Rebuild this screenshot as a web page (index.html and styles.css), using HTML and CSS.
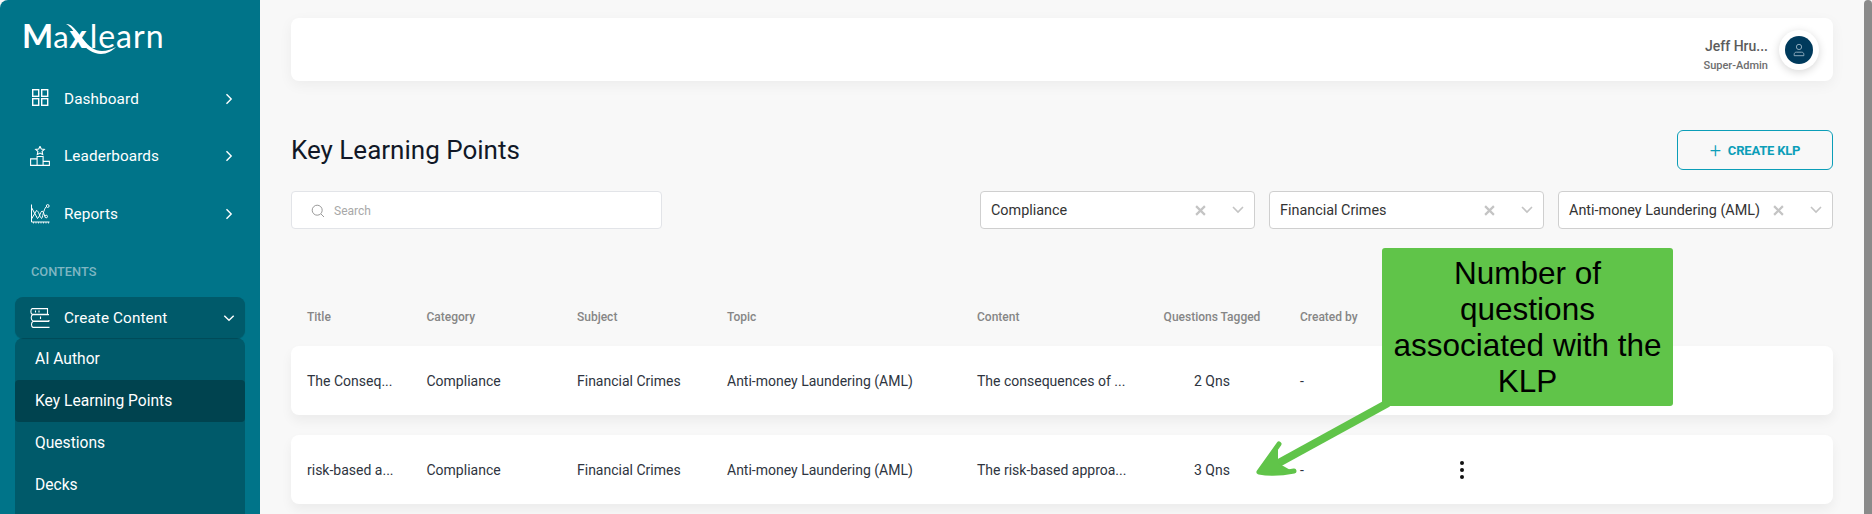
FILE: index.html
```html
<!DOCTYPE html>
<html lang="en">
<head>
<meta charset="utf-8">
<title>Key Learning Points</title>
<link rel="stylesheet" href="styles.css">
</head>
<body>
<div class="app">
  <aside class="sidebar">
    <div class="logo"><span class="logo-m">M</span><span class="logo-a">a</span><span class="logo-x">x</span><span class="logo-learn">learn</span>
      <svg class="logo-swoosh" viewBox="0 0 56 36" width="56" height="36"><path d="M2 1c7 0 11 8 17 15 6 8 12 12 19 12 5 0 10-2 14-4-4 4-9 7-15 7-8 0-15-5-21-13C11 11 8 4 2 1z" fill="#fff"/></svg>
    </div>
    <nav class="nav">
      <a class="nav-item">
        <svg class="nav-icon" viewBox="0 0 20 20" fill="none" stroke="#fff" stroke-width="1.4"><rect x="2.700" y="0.700" width="6" height="6.600"/><rect x="11.700" y="0.700" width="6" height="6.600"/><rect x="2.700" y="9.700" width="6" height="6.600"/><rect x="11.700" y="9.700" width="6" height="6.600"/></svg>
        <span class="nav-label">Dashboard</span>
        <svg class="chev" viewBox="0 0 12 12" fill="none" stroke="#fff" stroke-width="1.400"><path d="M3.500 1.200 8.200 6 3.500 10.800"/></svg>
      </a>
      <a class="nav-item">
        <svg class="nav-icon" viewBox="0 0 20 20" fill="none" stroke="#fff" stroke-width="1.100"><path d="M.6 19.400v-6.500h6.500v6.500zM7.100 19.400V10.500h6v8.900zM13.100 19.400v-4h6.300v4zM10 .3l1.300 2.700 3 .4-2.200 2 .6 3L10 7l-2.700 1.400.6-3-2.200-2 3-.4z"/></svg>
        <span class="nav-label">Leaderboards</span>
        <svg class="chev" viewBox="0 0 12 12" fill="none" stroke="#fff" stroke-width="1.400"><path d="M3.500 1.200 8.200 6 3.500 10.800"/></svg>
      </a>
      <a class="nav-item">
        <svg class="nav-icon" viewBox="0 0 20 20" fill="none" stroke="#fff" stroke-width="1"><path d="M1.500 .5v17.500H19.500"/><path d="M1.500 3.500 7.500 14.500c2-1 2.500-6 4.500-7.500 1.500 0 2 4 3 5.500M1.500 15 6.500 6.500c2 0 3 6 5 8 1 0 2-9 4.500-11.500"/><circle cx="17.700" cy="2" r="1.400"/><circle cx="16.200" cy="12.500" r="1.300"/><path d="M3.500 18v1.500M6 18v1.500M8.500 18v1.500M11 18v1.500M13.500 18v1.500M16 18v1.500M18.500 18v1.500" stroke-width=".8"/></svg>
        <span class="nav-label">Reports</span>
        <svg class="chev" viewBox="0 0 12 12" fill="none" stroke="#fff" stroke-width="1.400"><path d="M3.500 1.200 8.200 6 3.500 10.800"/></svg>
      </a>
    </nav>
    <div class="nav-section">CONTENTS</div>
    <div class="group">
      <a class="group-head">
        <svg class="nav-icon" viewBox="0 0 20 20" fill="none" stroke="#fff" stroke-width="1.100"><path d="M2 .6h15.500v5.600H2C.5 5 .5 1.800 2 .6zM3 6.600C.6 7.600.6 12 3 13h16v-1M19 6.600H3M19 13.500H3C1 14.600 1 18.400 3 19.400h16.500M5.500 2.500v2M9 2.500v2M10.500 8.500v2.500"/></svg>
        <span class="nav-label">Create Content</span>
        <svg class="chev" viewBox="0 0 12 12" fill="none" stroke="#fff" stroke-width="1.400"><path d="M1.300 3.700 6 8.300 10.700 3.700"/></svg>
      </a>
      <div class="submenu">
        <a class="sub-item">AI Author</a>
        <a class="sub-item active">Key Learning Points</a>
        <a class="sub-item">Questions</a>
        <a class="sub-item">Decks</a>
      </div>
    </div>
  </aside>

  <main class="main">
    <header class="topbar">
      <div class="user">
        <div class="user-name">Jeff Hru...</div>
        <div class="user-role">Super-Admin</div>
      </div>
      <div class="avatar-ring">
        <div class="avatar">
          <svg viewBox="0 0 16 16" width="14" height="14" fill="none" stroke="#9fb8c8" stroke-width="1"><circle cx="8" cy="4.500" r="3"/><path d="M2.500 14.500v-1.500c0-1.500 1-2.500 2.500-2.500h6c1.500 0 2.500 1 2.500 2.500v1.500z"/></svg>
        </div>
      </div>
    </header>

    <div class="title-row">
      <h1 class="page-title">Key Learning Points</h1>
      <button class="create-btn"><span class="plus">+</span>CREATE KLP</button>
    </div>

    <div class="filters">
      <div class="search">
        <svg viewBox="0 0 14 14" width="14" height="14" fill="none" stroke="#9a9a9a" stroke-width="1"><circle cx="6.200" cy="6.200" r="5"/><path d="M10 10l3 3"/></svg>
        <span>Search</span>
      </div>
      <div class="selects">
        <div class="select"><span class="select-val">Compliance</span><span class="x"><svg viewBox="0 0 10 10" width="11" height="11" stroke="#c4c4c4" stroke-width="2"><path d="M1 1l8 8M9 1l-8 8"/></svg></span><svg class="caret" viewBox="0 0 12 8" width="12" height="8" fill="none" stroke="#c4c4c4" stroke-width="1.600"><path d="M1 1l5 5 5-5"/></svg></div>
        <div class="select"><span class="select-val">Financial Crimes</span><span class="x"><svg viewBox="0 0 10 10" width="11" height="11" stroke="#c4c4c4" stroke-width="2"><path d="M1 1l8 8M9 1l-8 8"/></svg></span><svg class="caret" viewBox="0 0 12 8" width="12" height="8" fill="none" stroke="#c4c4c4" stroke-width="1.600"><path d="M1 1l5 5 5-5"/></svg></div>
        <div class="select"><span class="select-val">Anti-money Laundering (AML)</span><span class="x"><svg viewBox="0 0 10 10" width="11" height="11" stroke="#c4c4c4" stroke-width="2"><path d="M1 1l8 8M9 1l-8 8"/></svg></span><svg class="caret" viewBox="0 0 12 8" width="12" height="8" fill="none" stroke="#c4c4c4" stroke-width="1.600"><path d="M1 1l5 5 5-5"/></svg></div>
      </div>
    </div>

    <div class="table">
      <div class="row head">
        <span>Title</span><span>Category</span><span>Subject</span><span>Topic</span><span>Content</span><span class="ctr">Questions Tagged</span><span>Created by</span><span></span>
      </div>
      <div class="row card">
        <span>The Conseq...</span><span>Compliance</span><span>Financial Crimes</span><span>Anti-money Laundering (AML)</span><span>The consequences of ...</span><span class="ctr">2 Qns</span><span>-</span><span></span>
      </div>
      <div class="row card">
        <span>risk-based a...</span><span>Compliance</span><span>Financial Crimes</span><span>Anti-money Laundering (AML)</span><span>The risk-based approa...</span><span class="ctr">3 Qns</span><span>-</span><span class="dots"><i></i><i></i><i></i></span>
      </div>
    </div>
  </main>
  <div class="scrollbar"></div>

  <div class="callout">Number of questions associated with the KLP</div>
  <svg class="arrow" viewBox="0 0 1872 514" width="1872" height="514"><path d="M1388 403 1266 470" stroke="#60c449" stroke-width="8" fill="none"/><path d="M1279 444 1259 472C1270 474 1284 473 1294 471" stroke="#60c449" stroke-width="5" fill="none" stroke-linecap="round" stroke-linejoin="round"/><path d="M1278 446 1259 472 1292 471 1278 463z" fill="#60c449"/></svg>
</div>
</body>
</html>
```
FILE: styles.css
```css
* { box-sizing: border-box; }
html, body { margin: 0; height: 514px; overflow: hidden; }
body { font-family: Roboto, "Liberation Sans", sans-serif; background: #f8f8f8; }
.app { display: flex; width: 1872px; height: 514px; position: relative; overflow: hidden; }

.sidebar { width: 260px; flex: none; background: #007489; color: #fff; padding: 0 15px; border-top-left-radius: 8px; }
.logo { position: relative; height: 70px; padding: 16px 0 0 7px; display: flex; align-items: baseline; font-family: Lato, sans-serif; line-height: 38px; white-space: nowrap; }
.logo-m { font-size: 33px; font-weight: 700; letter-spacing: -2px; }
.logo-a { font-size: 31px; font-weight: 400; margin-left: 2px; }
.logo-x { font-size: 32px; font-weight: 900; margin-left: 1px; }
.logo-learn { font-size: 32px; font-weight: 400; letter-spacing: 1px; margin-left: 3px; }
.logo-swoosh { position: absolute; left: 49px; top: 23px; }
.nav { display: flex; flex-direction: column; }
.nav-item { height: 57.500px; display: flex; align-items: center; padding: 0 10px 0 15px; font-size: 15.300px; }
.nav-icon { width: 20px; height: 20px; flex: none; }
.nav-label { margin-left: 14px; flex: 1; letter-spacing: .1px; }
.chev { width: 12px; height: 12px; flex: none; }
.nav-section { margin-top: 20.500px; padding-left: 16px; font-size: 12.800px; font-weight: 500; color: #7fb6c2; height: 34px; line-height: 18px; }
.group { display: flex; flex-direction: column; }
.group-head { height: 41px; background: #005a6a; border-radius: 8px; display: flex; align-items: center; padding: 0 10px 0 15px; font-size: 15.300px; box-shadow: 0 1px 1px rgba(0,0,0,.18); position: relative; }
.submenu { background: #005a6a; border-radius: 8px 8px 0 0; height: 200px; }
.sub-item { display: flex; align-items: center; height: 42px; padding-left: 20px; font-size: 15.600px; border-radius: 4px; }
.sub-item.active { background: #00434f; }

.main { flex: 1; padding: 18px 31px 0; min-width: 0; }
.topbar { height: 63px; background: #fff; border-radius: 8px; box-shadow: 0 4px 14px rgba(0,0,0,.05); display: flex; justify-content: flex-end; align-items: center; padding-right: 14px; }
.user { text-align: right; margin-right: 11px; padding-top: 10px; }
.user-name { font-size: 14px; font-weight: 500; color: #5c5c5c; line-height: 20px; }
.user-role { font-size: 11px; font-weight: 500; color: #6e6e6e; line-height: 16px; margin-top: 2px; }
.avatar-ring { width: 40px; height: 40px; border-radius: 50%; background: #fff; box-shadow: 0 2px 8px rgba(0,0,0,.16); display: flex; align-items: center; justify-content: center; }
.avatar { width: 28px; height: 28px; border-radius: 50%; background: #003a5c; display: flex; align-items: center; justify-content: center; }

.title-row { display: flex; justify-content: space-between; align-items: center; margin-top: 49px; height: 40px; }
.page-title { margin: 0; font-size: 26px; font-weight: 400; color: #111827; }
.create-btn { width: 156px; height: 40px; background: transparent; border: 1px solid #0b9eb8; border-radius: 6px; color: #0b9eb8; font: 700 13px Roboto, sans-serif; letter-spacing: -.2px; display: flex; align-items: center; justify-content: center; }
.plus { font-size: 20px; font-weight: 300; margin-right: 7px; line-height: 1; }

.filters { display: flex; justify-content: space-between; margin-top: 21px; }
.search { width: 371px; height: 38px; background: #fff; border: 1px solid #e2e4e8; border-radius: 4px; display: flex; align-items: center; padding-left: 19px; gap: 9px; font-size: 12px; color: #a8a8a8; padding-top: 1px; }
.selects { display: flex; gap: 14px; }
.select { width: 275px; height: 38px; background: #fff; border: 1px solid #cfcfcf; border-radius: 4px; display: flex; align-items: center; padding: 0 8px 0 10px; font-size: 14.400px; color: #333; }
.select-val { flex: 1; white-space: nowrap; }
.x { margin-right: 26px; display: flex; }
.caret { flex: none; margin-right: 2px; }

.table { margin-top: 67px; display: flex; flex-direction: column; gap: 20px; }
.row { display: grid; grid-template-columns: 119.500px 150.500px 150px 250px 147px 176px 160px 1fr; align-items: center; padding-left: 16px; font-size: 14px; color: #2e3440; white-space: nowrap; }
.row.head { font-size: 12px; font-weight: 500; color: #868686; height: 40px; margin-bottom: -10px; padding-top: 2px; }
.row.card { height: 69px; background: #fff; border-radius: 8px; box-shadow: 0 6px 12px rgba(0,0,0,.05); }
.ctr { text-align: center; }
.dots { display: flex; flex-direction: column; gap: 3px; width: 5px; }
.dots i { width: 4px; height: 4px; border-radius: 50%; background: #111; }

.scrollbar { flex: none; width: 8px; height: 514px; background: #8a8a8a; border-radius: 4px 4px 0 0; }
.callout { position: absolute; left: 1382px; top: 248px; width: 291px; height: 158px; background: #60c449; border-radius: 3px; color: #000; font: 400 31.500px/36px "Liberation Sans", sans-serif; text-align: center; display: flex; align-items: center; justify-content: center; padding: 0 10px; }
.arrow { position: absolute; left: 0; top: 0; pointer-events: none; }
```
